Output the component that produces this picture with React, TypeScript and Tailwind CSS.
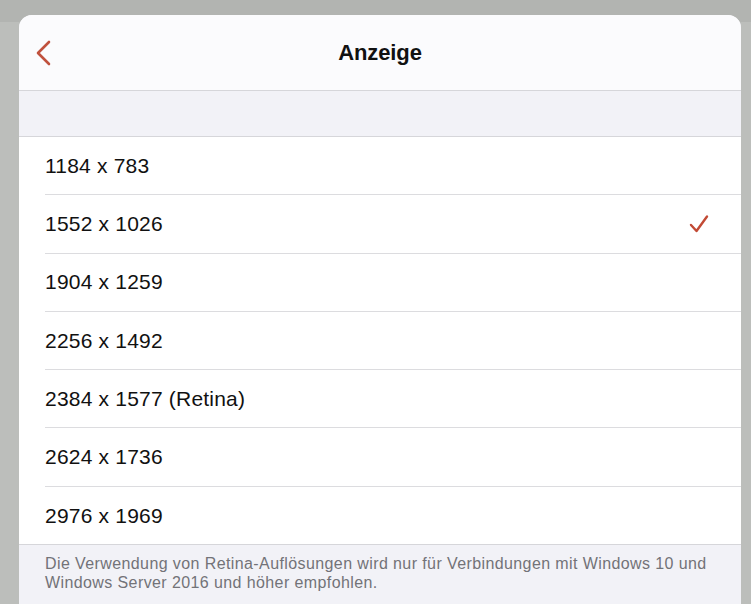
import React from "react";

const rows = [
  "1184 x 783",
  "1552 x 1026",
  "1904 x 1259",
  "2256 x 1492",
  "2384 x 1577 (Retina)",
  "2624 x 1736",
  "2976 x 1969",
];

export default function App() {
  return (
    <div
      className="w-[751px] h-[604px] overflow-hidden bg-[linear-gradient(to_bottom,#b2b4b1_22px,#bcbebb_22px)] pt-[15px] pl-[19px] pr-[10px]"
      style={{ fontFamily: '"Liberation Sans", Arial, sans-serif' }}
    >
      <div className="w-[722px] h-[620px] rounded-t-[13px] overflow-hidden bg-[#f2f2f7] flex flex-col">
        <div className="h-[76px] shrink-0 bg-[#fbfbfd] border-b border-[#d6d6da] flex items-center relative">
          <svg
            className="absolute left-[15px] top-[24px]"
            width="19"
            height="28"
            viewBox="0 0 19 28"
            fill="none"
          >
            <path
              d="M15 3 L4 14 L15 25"
              stroke="#c0513d"
              strokeWidth="2.6"
              strokeLinecap="round"
              strokeLinejoin="round"
            />
          </svg>
          <div className="flex-1 text-center text-[22px] font-bold text-[#111] tracking-[-0.1px] pb-[1px]">
            Anzeige
          </div>
        </div>
        <div className="h-[46px] shrink-0 bg-[#f2f2f7] border-b border-[#d6d6da]" />
        <div className="bg-white flex flex-col border-b border-[#d6d6da]">
          {rows.map((r, i) => (
            <div key={r} className="pl-[26px] flex flex-col">
              <div className="h-[57.3px] flex items-center pr-[32px]">
                <span className="flex-1 text-[21px] tracking-[0.2px] text-[#111]">{r}</span>
                {i === 1 && (
                  <svg width="20" height="20" viewBox="0 0 20 20" fill="none">
                    <path
                      d="M2 11 L7.5 17 L18 2.5"
                      stroke="#c24a35"
                      strokeWidth="2.4"
                      strokeLinecap="round"
                      strokeLinejoin="round"
                    />
                  </svg>
                )}
              </div>
              {i < rows.length - 1 && <div className="h-px bg-[#dcdcdf]" />}
            </div>
          ))}
        </div>
        <div className="pl-[26px] pr-[20px] pt-[9px] text-[16px] leading-[19px] tracking-[0.4px] text-[#737378]">
          Die Verwendung von Retina-Auflösungen wird nur für Verbindungen mit Windows 10 und Windows Server 2016 und höher empfohlen.
        </div>
      </div>
    </div>
  );
}
